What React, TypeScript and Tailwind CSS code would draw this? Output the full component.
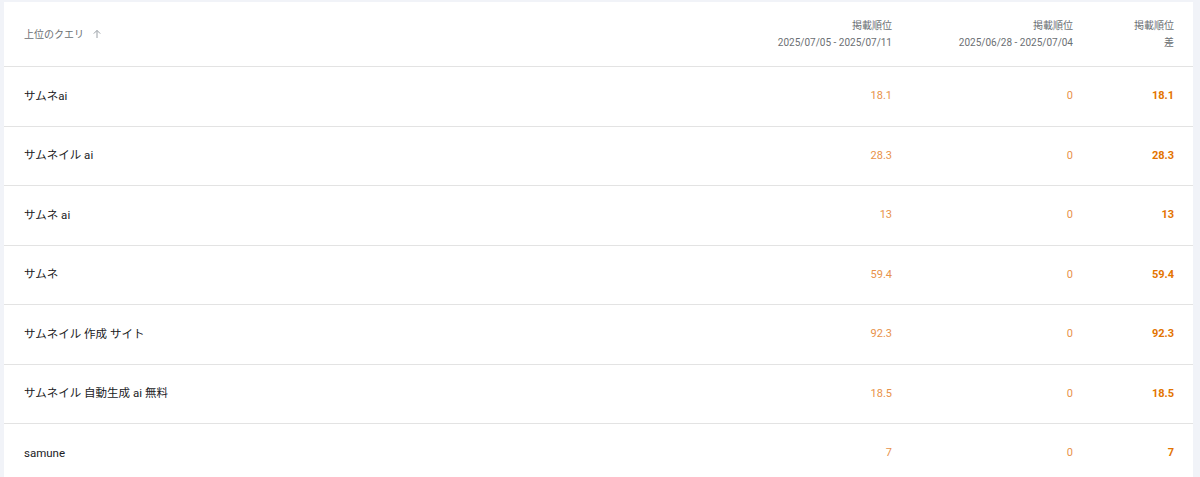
const rows = [
  { q: "サムネai", a: "18.1", b: "0", d: "18.1" },
  { q: "サムネイル ai", a: "28.3", b: "0", d: "28.3" },
  { q: "サムネ ai", a: "13", b: "0", d: "13" },
  { q: "サムネ", a: "59.4", b: "0", d: "59.4" },
  { q: "サムネイル 作成 サイト", a: "92.3", b: "0", d: "92.3" },
  { q: "サムネイル 自動生成 ai 無料", a: "18.5", b: "0", d: "18.5" },
  { q: "samune", a: "7", b: "0", d: "7" },
];

function ArrowUp() {
  return (
    <svg width="10" height="10" viewBox="0 0 10 10" className="ml-[8px] text-[#9aa0a6]">
      <path d="M5 9V1.5M1.8 4.6L5 1.4l3.2 3.2" fill="none" stroke="currentColor" strokeWidth="1" />
    </svg>
  );
}

export default function App() {
  return (
    <div
      className="h-[477px] w-[1200px] overflow-hidden bg-[#f1f3f8] pl-[4px] pr-[7px] pt-[2px]"
      style={{ fontFamily: "Roboto, 'Noto Sans CJK JP', sans-serif" }}
    >
      <div className="bg-white">
        <div className="grid h-[65px] grid-cols-[1fr_181px_181px_101px] items-center border-b border-[#e3e3e3] pl-[20px] pr-[19px] text-[10px] leading-[17px] text-[#6b6f73]">
          <div className="flex items-center">
            上位のクエリ
            <ArrowUp />
          </div>
          <div className="text-right">
            <div>掲載順位</div>
            <div>2025/07/05 - 2025/07/11</div>
          </div>
          <div className="text-right">
            <div>掲載順位</div>
            <div>2025/06/28 - 2025/07/04</div>
          </div>
          <div className="text-right">
            <div>掲載順位</div>
            <div>差</div>
          </div>
        </div>
        {rows.map((r) => (
          <div
            key={r.q}
            className="grid h-[59.5px] grid-cols-[1fr_181px_181px_101px] items-center border-b border-[#e3e3e3] pl-[20px] pr-[19px] text-[11px]"
          >
            <div className="text-[11.5px] text-[#202124]">{r.q}</div>
            <div className="text-right text-[#e8924a]">{r.a}</div>
            <div className="text-right text-[#e8924a]">{r.b}</div>
            <div className="text-right font-bold text-[#e37400]">{r.d}</div>
          </div>
        ))}
      </div>
    </div>
  );
}
